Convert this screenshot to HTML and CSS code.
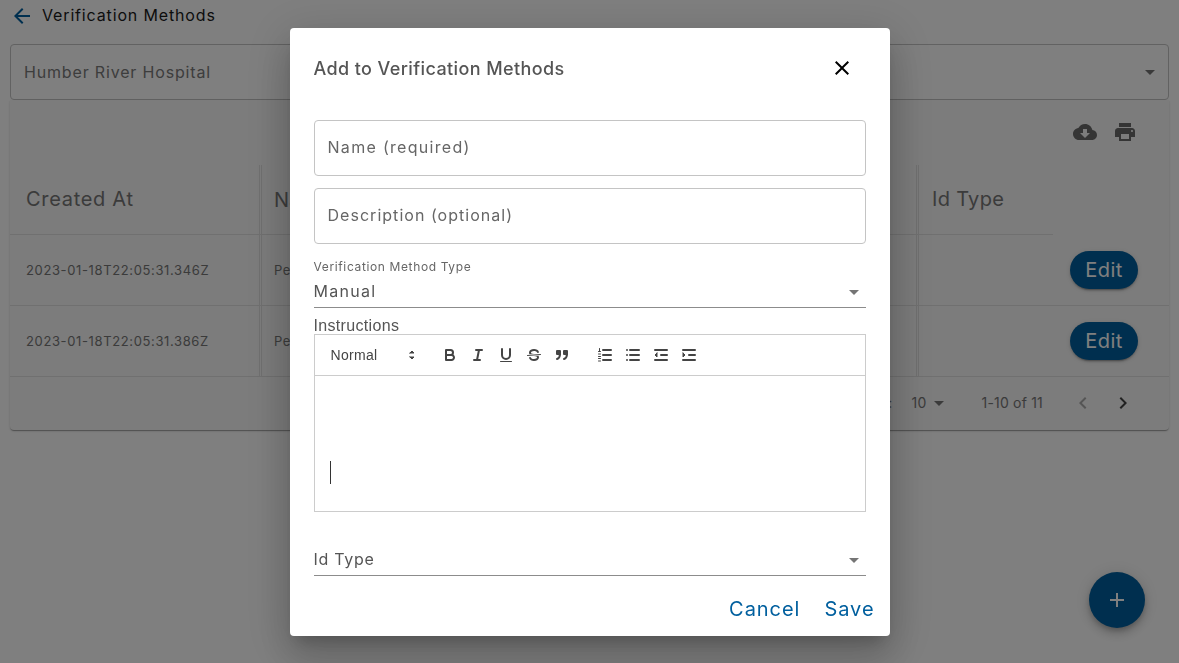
FILE: index.html
```html
<!DOCTYPE html>
<html lang="en">
<head>
<meta charset="utf-8">
<title>Verification Methods</title>
<link rel="stylesheet" href="styles.css">
</head>
<body>
<main class="page">
  <header class="page-head">
    <svg class="back" viewBox="0 0 24 24"><path d="M20 11H7.83l5.59-5.59L12 4l-8 8 8 8 1.41-1.41L7.83 13H20v-2z"/></svg>
    <h1 class="page-title">Verification Methods</h1>
  </header>
  <div class="org-select">
    <span>Humber River Hospital</span>
    <svg class="drop" viewBox="0 0 24 24"><path d="M7 10l5 5 5-5z"/></svg>
  </div>
  <section class="card">
    <div class="card-tools">
      <svg class="tool" viewBox="0 0 24 24"><path d="M19.35 10.04C18.67 6.59 15.64 4 12 4 9.11 4 6.6 5.64 5.35 8.04 2.34 8.36 0 10.91 0 14c0 3.31 2.69 6 6 6h13c2.76 0 5-2.24 5-5 0-2.64-2.05-4.78-4.65-4.96zM17 13l-5 5-5-5h3V9h4v4h3z"/></svg>
      <svg class="tool" viewBox="0 0 24 24"><path d="M19 8H5c-1.66 0-3 1.34-3 3v6h4v4h12v-4h4v-6c0-1.66-1.34-3-3-3zm-3 11H8v-5h8v5zm3-7c-.55 0-1-.45-1-1s.45-1 1-1 1 .45 1 1-.45 1-1 1zm-1-9H6v4h12V3z"/></svg>
    </div>
    <div class="row row-head">
      <div class="cell c1">Created At</div>
      <div class="cell c2">Name</div>
      <div class="cell c3">Id Type</div>
    </div>
    <div class="row row-body">
      <div class="cell c1">2023-01-18T22:05:31.346Z</div>
      <div class="cell c2">Peer</div>
      <div class="cell c3"></div>
      <div class="cell c4"><button class="edit">Edit</button></div>
    </div>
    <div class="row row-body">
      <div class="cell c1">2023-01-18T22:05:31.386Z</div>
      <div class="cell c2">Peer</div>
      <div class="cell c3"></div>
      <div class="cell c4"><button class="edit">Edit</button></div>
    </div>
    <footer class="pager">
      <span class="pager-label">Rows per page:</span>
      <span class="pager-size">10</span>
      <svg class="pager-drop" viewBox="0 0 24 24"><path d="M7 10l5 5 5-5z"/></svg>
      <span class="pager-count">1-10 of 11</span>
      <svg class="pager-nav off" viewBox="0 0 24 24"><path d="M15.41 7.41 14 6l-6 6 6 6 1.41-1.41L10.83 12z"/></svg>
      <svg class="pager-nav" viewBox="0 0 24 24"><path d="M10 6 8.59 7.41 13.17 12l-4.58 4.59L10 18l6-6z"/></svg>
    </footer>
  </section>
  <button class="fab"><svg viewBox="0 0 24 24"><path d="M19 13h-6v6h-2v-6H5v-2h6V5h2v6h6v2z"/></svg></button>
</main>

<div class="overlay">
  <div class="modal">
    <div class="modal-head">
      <h2 class="modal-title">Add to Verification Methods</h2>
      <svg class="close" viewBox="0 0 24 24"><path d="M19 6.41 17.59 5 12 10.59 6.41 5 5 6.41 10.59 12 5 17.59 6.41 19 12 13.41 17.59 19 19 17.59 13.41 12z"/></svg>
    </div>
    <div class="field field-name">Name (required)</div>
    <div class="field field-next">Description (optional)</div>
    <div class="small-label">Verification Method Type</div>
    <div class="line-select">
      <span class="manual">Manual</span>
      <svg class="drop" viewBox="0 0 24 24"><path d="M7 10l5 5 5-5z"/></svg>
    </div>
    <div class="ins-label">Instructions</div>
    <div class="toolbar">
      <span class="picker">Normal
        <svg class="q picker-arrows" viewBox="0 0 18 18"><polygon class="qfs" points="7 11 9 13 11 11 7 11"/><polygon class="qfs" points="7 7 9 5 11 7 7 7"/></svg>
      </span>
      <span class="formats">
        <span class="qb"><svg class="q" viewBox="0 0 18 18"><path d="M5,4H9.5A2.5,2.5,0,0,1,12,6.5v0A2.5,2.5,0,0,1,9.5,9H5V4Z"/><path d="M5,9h5.5A2.5,2.5,0,0,1,13,11.5v0A2.5,2.5,0,0,1,10.5,14H5V9Z"/></svg></span>
        <span class="qb"><svg class="q" viewBox="0 0 18 18"><line x1="7" x2="13" y1="4" y2="4"/><line x1="5" x2="11" y1="14" y2="14"/><line x1="8" x2="10" y1="14" y2="4"/></svg></span>
        <span class="qb"><svg class="q" viewBox="0 0 18 18"><path d="M5,3V9a4,4,0,0,0,4,4h0a4,4,0,0,0,4-4V3"/><rect class="qf" height="1" rx=".5" width="12" x="3" y="15"/></svg></span>
        <span class="qb"><svg class="q" viewBox="0 0 18 18"><line class="thin" x1="15.5" x2="2.5" y1="8.5" y2="9.5"/><path class="qf" d="M9.007,8C6.542,7.791,6,7.519,6,6.5,6,5.792,7.283,5,9,5c1.571,0,2.765.679,2.969,1.309a1,1,0,0,0,1.9-.617C13.356,4.106,11.354,3,9,3,6.2,3,4,4.538,4,6.5a3.2,3.2,0,0,0,.5,1.843Z"/><path class="qf" d="M8.984,10C11.457,10.208,12,10.479,12,11.5c0,.708-1.283,1.5-3,1.5-1.571,0-2.765-.679-2.969-1.309a1,1,0,1,0-1.9.617C4.644,13.894,6.646,15,9,15c2.8,0,5-1.538,5-3.5a3.2,3.2,0,0,0-.5-1.843Z"/></svg></span>
        <span class="qb"><svg class="q" viewBox="0 0 18 18"><rect class="qfb" height="3" width="3" x="4" y="5"/><rect class="qfb" height="3" width="3" x="11" y="5"/><path d="M7,8c0,4.031-3,5-3,5"/><path d="M14,8c0,4.031-3,5-3,5"/></svg></span>
      </span>
      <span class="formats">
        <span class="qb"><svg class="q" viewBox="0 0 18 18"><line x1="7" x2="15" y1="4" y2="4"/><line x1="7" x2="15" y1="9" y2="9"/><line x1="7" x2="15" y1="14" y2="14"/><line class="thin" x1="2.5" x2="4.5" y1="5.5" y2="5.5"/><line class="thin" x1="3.5" x2="3.5" y1="2.5" y2="5.5"/><line class="thin" x1="2.5" x2="4.5" y1="8" y2="8"/><line class="thin" x1="2.5" x2="4.5" y1="10.5" y2="10.5"/><line class="thin" x1="2.5" x2="4.5" y1="12.5" y2="12.5"/><line class="thin" x1="2.5" x2="4.5" y1="15" y2="15"/></svg></span>
        <span class="qb"><svg class="q" viewBox="0 0 18 18"><line x1="6" x2="15" y1="4" y2="4"/><line x1="6" x2="15" y1="9" y2="9"/><line x1="6" x2="15" y1="14" y2="14"/><line x1="3" x2="3" y1="4" y2="4"/><line x1="3" x2="3" y1="9" y2="9"/><line x1="3" x2="3" y1="14" y2="14"/></svg></span>
        <span class="qb"><svg class="q" viewBox="0 0 18 18"><line x1="3" x2="15" y1="14" y2="14"/><line x1="3" x2="15" y1="4" y2="4"/><line x1="9" x2="15" y1="9" y2="9"/><polyline class="qfs" points="5 7 5 11 3 9 5 7"/></svg></span>
        <span class="qb"><svg class="q" viewBox="0 0 18 18"><line x1="3" x2="15" y1="14" y2="14"/><line x1="3" x2="15" y1="4" y2="4"/><line x1="9" x2="15" y1="9" y2="9"/><polyline class="qfs" points="3 7 3 11 5 9 3 7"/></svg></span>
      </span>
    </div>
    <div class="editor"><span class="caret"></span></div>
    <div class="line-select id-type">
      <span>Id Type</span>
      <svg class="drop" viewBox="0 0 24 24"><path d="M7 10l5 5 5-5z"/></svg>
    </div>
    <div class="actions">
      <button class="text-btn">Cancel</button>
      <button class="text-btn">Save</button>
    </div>
  </div>
</div>
</body>
</html>
```
FILE: styles.css
```css
* { box-sizing: border-box; }
html, body { margin: 0; height: 100%; overflow: hidden; background: #fff; }
body { font-family: Inter, "Noto Sans", sans-serif; color: #222; }
h1, h2 { margin: 0; font-weight: 400; }
button { font-family: inherit; border: 0; background: none; padding: 0; }
svg { display: block; fill: currentColor; }

.page { position: relative; height: 663px; padding: 0 10px; }
.page-head { height: 44px; padding: 4px 0 0 0; display: flex; align-items: flex-start; }
.back { width: 24px; height: 24px; margin: 0 8px 0 0; color: #005f9e; }
.page-title { font-size: 16px; line-height: 22px; letter-spacing: .85px; color: #1a1a1a; }
.org-select { height: 56px; border: 1px solid #c4c4c4; border-radius: 4px; padding: 0 6px 0 13px; display: flex; align-items: center; justify-content: space-between; font-size: 16px; letter-spacing: .83px; color: #7a7a7a; }
.drop { width: 24px; height: 24px; color: #757575; }

.card { height: 330px; border-radius: 0 0 4px 4px; box-shadow: 0 2px 1px -1px rgba(0,0,0,.2), 0 1px 1px rgba(0,0,0,.14), 0 1px 3px rgba(0,0,0,.12); background: #f8f8f8; }
.card-tools { height: 65px; padding: 20px 32px 0 0; display: flex; justify-content: flex-end; gap: 16px; }
.tool { width: 24px; height: 24px; color: #6a6a6a; }
.row { display: flex; }
.row-head { height: 70px; font-size: 20px; letter-spacing: .3px; color: #777; }
.row-head .c1 { letter-spacing: .7px; padding-bottom: 2px; }
.row-head .c3 { padding-bottom: 2px; }
.row-body { height: 71px; font-size: 13px; letter-spacing: .63px; color: #777; border-bottom: 1px solid #e0e0e0; }
.cell { display: flex; align-items: center; overflow: hidden; white-space: nowrap; }
.c1 { width: 252px; padding-left: 16px; border-right: 3px double #e0e0e0; }
.c2 { width: 657px; padding-left: 12px; border-right: 3px double #e0e0e0; }
.c3 { width: 134px; padding-left: 13px; }
.c4 { flex: 1; padding-left: 17px; }
.row-head .c1, .row-head .c2, .row-head .c3 { border-bottom: 1px solid #e0e0e0; }
.edit { width: 68px; height: 38px; border-radius: 19px; background: #005f9e; color: #fff; font-size: 20px; letter-spacing: .4px; box-shadow: 0 3px 1px -2px rgba(0,0,0,.2), 0 2px 2px rgba(0,0,0,.14), 0 1px 5px rgba(0,0,0,.12); }
.pager { height: 53px; display: flex; align-items: center; font-size: 14px; letter-spacing: .2px; color: #777; padding: 0 34px 2px 0; justify-content: flex-end; }
.pager-label { margin-right: 19px; }
.pager-drop { width: 24px; height: 24px; }
.pager-count { margin: 0 28px 0 31px; }
.pager-nav { width: 24px; height: 24px; color: #444; }
.pager-nav + .pager-nav { margin-left: 16px; }
.pager-nav.off { color: #aaa; }
.fab { position: absolute; left: 1089px; top: 572px; width: 56px; height: 56px; border-radius: 50%; background: #005f9e; color: #fff; display: flex; align-items: center; justify-content: center; box-shadow: 0 3px 5px -1px rgba(0,0,0,.2), 0 6px 10px rgba(0,0,0,.14), 0 1px 18px rgba(0,0,0,.12); }
.fab svg { width: 24px; height: 24px; }

.overlay { position: fixed; inset: 0; background: rgba(0,0,0,.5); display: flex; align-items: flex-start; justify-content: center; padding-top: 28px; }
.modal { width: 600px; height: 608px; background: #fff; border-radius: 4px; padding: 0 24px; box-shadow: 0 11px 15px -7px rgba(0,0,0,.2), 0 24px 38px 3px rgba(0,0,0,.14), 0 9px 46px 8px rgba(0,0,0,.12); }
.modal-head { height: 92px; padding-top: 20px; display: flex; justify-content: space-between; align-items: flex-start; }
.modal-title { font-size: 18px; line-height: 41px; font-weight: 500; letter-spacing: .4px; color: #555; }
.close { width: 24px; height: 24px; margin: 8px 12px 0 0; color: #000; }
.field { height: 56px; border: 1px solid #c4c4c4; border-radius: 4px; padding: 0 13px 2px; display: flex; align-items: center; font-size: 16px; letter-spacing: 1.03px; color: #666; }
.field-name { letter-spacing: 1.3px; }
.field-next { margin-top: 12px; }
.small-label { margin-top: 14px; font-size: 12px; line-height: 18px; letter-spacing: .63px; color: #666; }
.line-select { height: 32px; padding-bottom: 2px; border-bottom: 1px solid #8c8c8c; display: flex; align-items: center; justify-content: space-between; font-size: 16px; letter-spacing: .7px; color: #555; }
.manual { letter-spacing: 1.3px; }
.line-select .drop { margin-bottom: -2px; }
.ins-label { margin-top: 8px; height: 18px; font-family: "Liberation Sans", Arial, sans-serif; font-size: 16px; line-height: 19px; letter-spacing: .33px; color: #555; }
.toolbar { height: 42px; border: 1px solid #ccc; padding: 8px; display: flex; align-items: center; }
.picker { width: 98px; height: 24px; padding-left: 8px; display: flex; align-items: center; justify-content: space-between; font-family: "Liberation Sans", Arial, sans-serif; font-size: 14px; letter-spacing: .3px; color: #444; margin-right: 15px; }
.formats { display: flex; margin-right: 15px; }
.qb { width: 28px; height: 24px; padding: 3px 5px; }
.q { width: 18px; height: 18px; fill: none; stroke: #444; stroke-width: 2; stroke-linecap: round; stroke-linejoin: round; }
.q .qf { fill: #444; stroke: none; }
.q .qfb { fill: #444; stroke: #444; stroke-width: 2; }
.q .qfs { fill: #444; stroke: #444; stroke-width: 1; }
.q .thin { stroke-width: 1; }
.editor { height: 136px; border: 1px solid #ccc; border-top: 0; padding: 85px 15px 0; }
.caret { display: block; width: 1px; height: 23px; background: #333; }
.id-type { margin-top: 32px; }
.actions { margin: 15px -17px 0 0; display: flex; justify-content: flex-end; gap: 8px; }
.text-btn { padding: 6px 8px; font-size: 20px; line-height: 24px; letter-spacing: .95px; color: #005f9e; }
```
